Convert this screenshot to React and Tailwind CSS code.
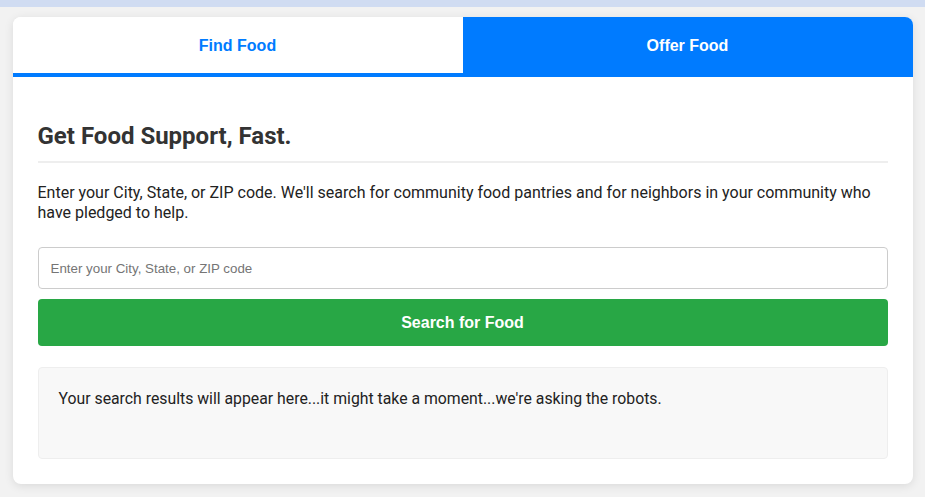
export default function App() {
  return (
    <div className="min-h-[497px] bg-[#f2f2f2]" style={{ fontFamily: "Roboto, 'Liberation Sans', sans-serif" }}>
      <div className="h-[7px] bg-[#d0dcf2]" />
      <div className="mx-auto mt-[10px] w-[900px] overflow-hidden rounded-[8px] bg-white shadow-[0_2px_10px_rgba(0,0,0,0.1)]">
        <div className="flex border-b-4 border-[#007bff]" style={{ fontFamily: "'Liberation Sans', Arial, sans-serif" }}>
          <button className="flex h-[56px] flex-1 items-center justify-center bg-white pt-[2px] text-[16px] font-bold text-[#007bff]">
            Find Food
          </button>
          <button className="flex h-[56px] flex-1 items-center justify-center bg-[#007bff] pt-[2px] text-[16px] font-bold text-white">
            Offer Food
          </button>
        </div>
        <div className="px-[25px] pb-[25px] pt-[45px]">
          <h2 className="border-b-2 border-[#eeeeee] pb-[11px] text-[24px] font-bold leading-[28px] text-[#333333]">
            Get Food Support, Fast.
          </h2>
          <p className="mt-[20px] text-[16px] leading-[20px] text-[#222222]">
            Enter your City, State, or ZIP code. We'll search for community food pantries and for neighbors in your community who have pledged to help.
          </p>
          <input
            type="text"
            placeholder="Enter your City, State, or ZIP code"
            className="mt-[24px] block h-[42px] w-full rounded-[4px] border border-[#cccccc] px-[12px] text-[13.33px] text-[#333] placeholder:text-[#757575] outline-none"
            style={{ fontFamily: "'Liberation Sans', Arial, sans-serif" }}
          />
          <button
            className="mt-[10px] flex h-[47px] w-full items-center justify-center rounded-[4px] bg-[#28a745] text-[16px] font-bold text-white"
            style={{ fontFamily: "'Liberation Sans', Arial, sans-serif" }}
          >
            Search for Food
          </button>
          <div className="mt-[21px] h-[92px] rounded-[4px] border border-[#eeeeee] bg-[#f8f8f8] px-[20px] pb-[19px] pt-[21px] text-[15.8px] leading-[20px] text-[#222222]">
            Your search results will appear here...it might take a moment...we're asking the robots.
          </div>
        </div>
      </div>
    </div>
  );
}
